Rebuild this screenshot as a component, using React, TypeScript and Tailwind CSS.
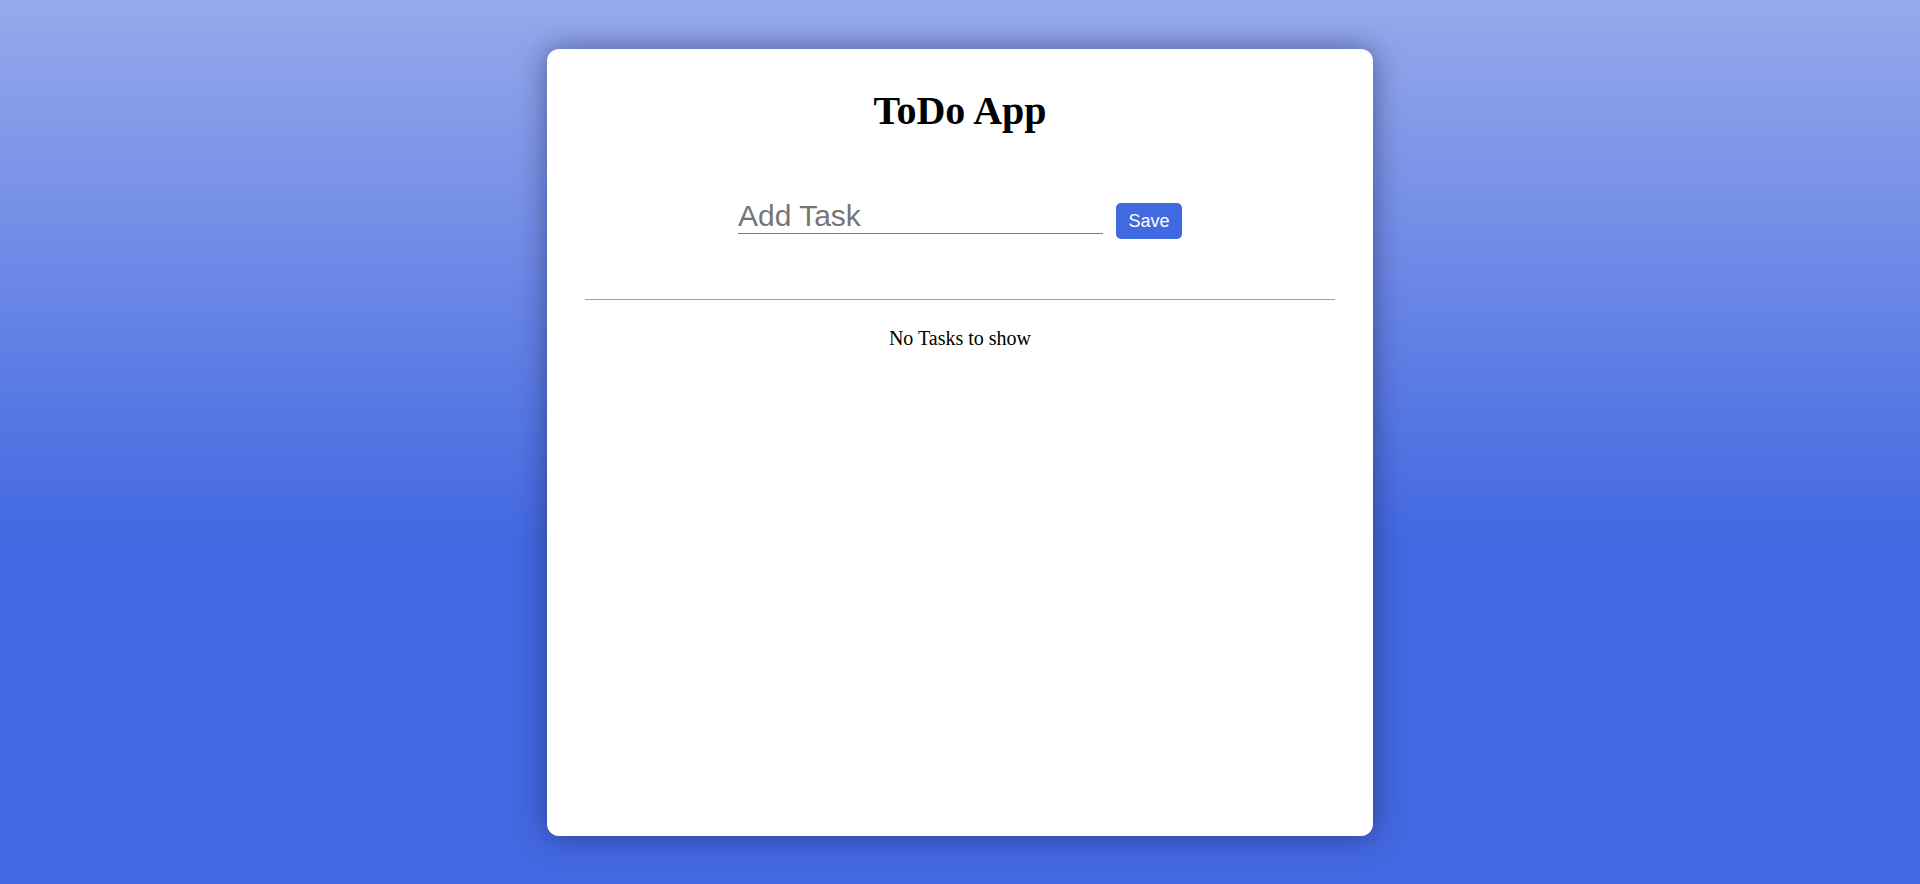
import { useState } from 'react'

export default function App() {
  const [task, setTask] = useState('')
  const [tasks, setTasks] = useState<string[]>([])

  const save = () => {
    if (!task.trim()) return
    setTasks([...tasks, task.trim()])
    setTask('')
  }

  return (
    <div className="min-h-screen w-full bg-[linear-gradient(180deg,#96a9ec_0%,#4368e1_61%,#4368e1_100%)] pt-[49px] pb-[48px]">
      <div className="mx-auto w-[826px] h-[787px] bg-white rounded-[12px] shadow-[0_0_28px_rgba(20,20,60,0.5)] px-[38px] flex flex-col">
        <h1 className="mt-[40px] text-center text-[40px] leading-[44px] font-bold text-black [font-family:'Liberation_Serif',serif]">
          ToDo App
        </h1>

        <div className="mt-[64px] flex items-start justify-center gap-[13px]">
          <input
            value={task}
            onChange={e => setTask(e.target.value)}
            placeholder="Add Task"
            className="w-[365px] h-[37px] border-b border-[#7a7a7a] outline-none bg-transparent text-[30px] text-[#333] placeholder:text-[#757575] [font-family:'Liberation_Sans',Arial,sans-serif]"
          />
          <button
            onClick={save}
            className="mt-[6px] w-[66px] h-[36px] rounded-[5px] bg-[#4169e1] text-white text-[18px] [font-family:'Liberation_Sans',Arial,sans-serif]"
          >
            Save
          </button>
        </div>

        <hr className="mt-[60px] border-0 border-t border-[#a3a3a3]" />

        {tasks.length === 0 ? (
          <p className="mt-[27px] text-center text-[20px] leading-[22px] text-black [font-family:'Liberation_Serif',serif]">
            No Tasks to show
          </p>
        ) : (
          <ul className="mt-[27px] text-[20px] leading-[28px] [font-family:'Liberation_Serif',serif]">
            {tasks.map((t, i) => (
              <li key={i}>{t}</li>
            ))}
          </ul>
        )}
      </div>
    </div>
  )
}
